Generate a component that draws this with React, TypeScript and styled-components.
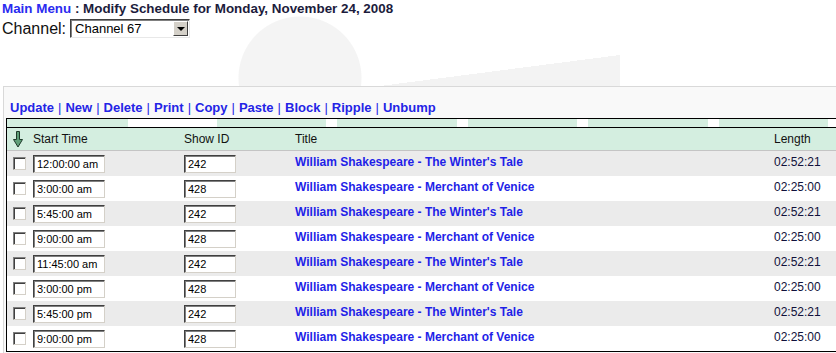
import React from 'react';
import styled, { createGlobalStyle } from 'styled-components';

const GlobalStyle = createGlobalStyle`
  html, body {
    margin: 0;
    padding: 0;
    background: #fff;
    overflow: hidden;
  }
  body {
    font-family: "Liberation Sans", Arial, sans-serif;
  }
`;

const Page = styled.div`
  width: 900px;
  height: 353px;
  padding-left: 2px;
  box-sizing: border-box;
  /* faint decorative backdrop behind the header */
  background:
    radial-gradient(circle 62px at 300px 78px, #f4f4f4 61px, rgba(255,255,255,0) 62px),
    linear-gradient(to top left, #f3f3f3 50%, rgba(255,255,255,0) 50%) 380px 55px / 240px 31px no-repeat,
    #fff;
`;

const TitleLine = styled.div`
  padding-top: 1px;
  font-size: 13.4px;
  font-weight: bold;
  line-height: 16px;
  color: #1c1c3c;
`;

const MenuLink = styled.a`
  color: #2b2bf0;
  text-decoration: none;
`;

const ChannelRow = styled.div`
  display: flex;
  align-items: center;
  gap: 4px;
  height: 21px;
  margin-top: 1px;
  font-size: 16px;
  color: #111;
`;

const Combo = styled.div`
  display: flex;
  align-items: center;
  justify-content: space-between;
  width: 120px;
  height: 19px;
  box-sizing: border-box;
  background: #fff;
  border: 1px solid;
  border-color: #404040 #e8e8e8 #e8e8e8 #404040;
  box-shadow: inset 1px 1px 0 #808080;
  font-size: 13px;
  color: #000;
  padding-left: 4px;
`;

const ComboButton = styled.span`
  display: flex;
  align-items: center;
  justify-content: center;
  width: 15px;
  height: 15px;
  margin-right: 1px;
  box-sizing: border-box;
  background: #d4d0c8;
  border: 1px solid;
  border-color: #fff #404040 #404040 #fff;
  &::after {
    content: '';
    border-left: 4px solid transparent;
    border-right: 4px solid transparent;
    border-top: 4px solid #000;
  }
`;

const Panel = styled.div`
  margin-top: 47px;
  margin-left: 1px;
  height: 270px;
  background: #f9f9f9;
  border-top: 1px solid #d9d9d9;
  border-left: 1px solid #d9d9d9;
  padding: 13px 0 0 2px;
`;

const Toolbar = styled.div`
  padding-left: 4px;
  font-size: 13px;
  font-weight: bold;
  line-height: 16px;
  color: #2424e6;
`;

const ToolLink = styled.a`
  color: #2424e6;
  text-decoration: none;
`;

const Sep = styled.span`
  color: #2424e6;
  font-weight: normal;
  margin: 0 4px;
`;

const Grid = styled.div`
  margin-top: 2px;
  width: 880px;
  border: 1px solid #000;
  border-right: none;
  background: #fff;
`;

const Strip = styled.div`
  display: flex;
  height: 8px;
  border-bottom: 1px solid #000;
  background: #fff;
`;

const Segment = styled.div<{ $w: number; $gap: number }>`
  width: ${p => p.$w}px;
  margin-right: ${p => p.$gap}px;
  background: #d4eee0;
  flex: none;
`;

const cols = '22px 151px 111px 479px 1fr';

const HeadRow = styled.div`
  display: grid;
  grid-template-columns: ${cols};
  align-items: center;
  height: 22px;
  background: #d4eee0;
  border-bottom: 1px solid #c4c4c4;
  font-size: 12px;
  color: #111;
`;

const Row = styled.div<{ $alt: boolean }>`
  display: grid;
  grid-template-columns: ${cols};
  align-items: center;
  height: 25px;
  background: ${p => (p.$alt ? '#ebebeb' : '#fff')};
  font-size: 12px;
`;

const Cell = styled.div<{ $lift?: boolean }>`
  padding-left: 4px;
  padding-bottom: ${p => (p.$lift ? 3 : 0)}px;
  display: flex;
  align-items: center;
  white-space: nowrap;
`;

const BoxCell = styled.div`
  padding-left: 6px;
  display: flex;
  align-items: center;
`;

const Check = styled.span`
  width: 13px;
  height: 13px;
  box-sizing: border-box;
  background: #fff;
  border: 1px solid;
  border-color: #808080 #d4d0c8 #d4d0c8 #808080;
  box-shadow: inset 1px 1px 0 #404040;
`;

const Field = styled.input<{ $w: number }>`
  width: ${p => p.$w}px;
  height: 18px;
  box-sizing: border-box;
  margin: 0;
  padding: 1px 0 0 3px;
  border: 1px solid;
  border-color: #404040 #d4d0c8 #d4d0c8 #404040;
  box-shadow: inset 1px 1px 0 #808080;
  background: #fff;
  font-family: "Liberation Sans", Arial, sans-serif;
  font-size: 11px;
  color: #000;
  outline: none;
`;

const ShowTitle = styled.a`
  color: #1f1fe8;
  font-weight: bold;
  text-decoration: none;
`;

const Length = styled.span`
  color: #10103a;
`;

const segments = [
  { w: 121, gap: 89 },
  { w: 109, gap: 11 },
  { w: 120, gap: 11 },
  { w: 109, gap: 11 },
  { w: 120, gap: 11 },
  { w: 109, gap: 11 },
];

const tools = ['Update', 'New', 'Delete', 'Print', 'Copy', 'Paste', 'Block', 'Ripple', 'Unbump'];

const winter = "William Shakespeare - The Winter's Tale";
const merchant = 'William Shakespeare - Merchant of Venice';

const schedule = [
  { time: '12:00:00 am', id: '242', title: winter, len: '02:52:21' },
  { time: '3:00:00 am', id: '428', title: merchant, len: '02:25:00' },
  { time: '5:45:00 am', id: '242', title: winter, len: '02:52:21' },
  { time: '9:00:00 am', id: '428', title: merchant, len: '02:25:00' },
  { time: '11:45:00 am', id: '242', title: winter, len: '02:52:21' },
  { time: '3:00:00 pm', id: '428', title: merchant, len: '02:25:00' },
  { time: '5:45:00 pm', id: '242', title: winter, len: '02:52:21' },
  { time: '9:00:00 pm', id: '428', title: merchant, len: '02:25:00' },
];

const SortArrow = () => (
  <svg width="10" height="17" viewBox="0 0 10 17">
    <path d="M3.5 0.5 H6.5 V8.5 H9.5 L5 16 L0.5 8.5 H3.5 Z" fill="#5f9f78" stroke="#1e3a2a" strokeWidth="1" />
  </svg>
);

const App: React.FC = () => (
  <Page>
    <GlobalStyle />
    <TitleLine>
      <MenuLink href="#">Main Menu</MenuLink> : Modify Schedule for Monday, November 24, 2008
    </TitleLine>
    <ChannelRow>
      Channel:
      <Combo>
        Channel 67
        <ComboButton />
      </Combo>
    </ChannelRow>
    <Panel>
      <Toolbar>
        {tools.map((t, i) => (
          <React.Fragment key={t}>
            {i > 0 && <Sep>|</Sep>}
            <ToolLink href="#">{t}</ToolLink>
          </React.Fragment>
        ))}
      </Toolbar>
      <Grid>
        <Strip>
          {segments.map((s, i) => (
            <Segment key={i} $w={s.w} $gap={s.gap} />
          ))}
        </Strip>
        <HeadRow>
          <BoxCell>
            <SortArrow />
          </BoxCell>
          <Cell>Start Time</Cell>
          <Cell>Show ID</Cell>
          <Cell>Title</Cell>
          <Cell>Length</Cell>
        </HeadRow>
        {schedule.map((r, i) => (
          <Row key={i} $alt={i % 2 === 0}>
            <BoxCell>
              <Check />
            </BoxCell>
            <Cell>
              <Field $w={72} defaultValue={r.time} readOnly />
            </Cell>
            <Cell>
              <Field $w={52} defaultValue={r.id} readOnly />
            </Cell>
            <Cell $lift>
              <ShowTitle href="#">{r.title}</ShowTitle>
            </Cell>
            <Cell $lift>
              <Length>{r.len}</Length>
            </Cell>
          </Row>
        ))}
      </Grid>
    </Panel>
  </Page>
);

export default App;
